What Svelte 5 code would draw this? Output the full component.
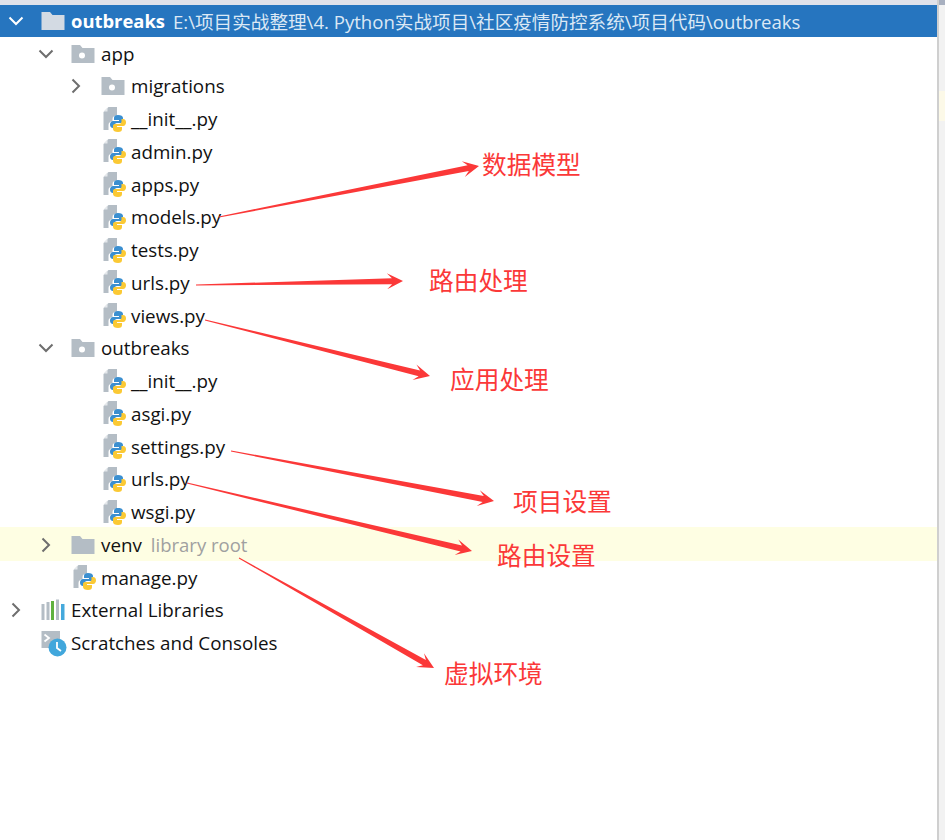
<script>
  const rows = [
    { level: 1, open: true, icon: "module", name: "app" },
    { level: 2, open: false, icon: "module", name: "migrations" },
    { level: 2, icon: "py", name: "__init__.py" },
    { level: 2, icon: "py", name: "admin.py" },
    { level: 2, icon: "py", name: "apps.py" },
    { level: 2, icon: "py", name: "models.py" },
    { level: 2, icon: "py", name: "tests.py" },
    { level: 2, icon: "py", name: "urls.py" },
    { level: 2, icon: "py", name: "views.py" },
    { level: 1, open: true, icon: "module", name: "outbreaks" },
    { level: 2, icon: "py", name: "__init__.py" },
    { level: 2, icon: "py", name: "asgi.py" },
    { level: 2, icon: "py", name: "settings.py" },
    { level: 2, icon: "py", name: "urls.py" },
    { level: 2, icon: "py", name: "wsgi.py" },
    { level: 1, open: false, icon: "folder", name: "venv", hint: "library root", marked: true },
    { level: 1, icon: "py", name: "manage.py" },
    { level: 0, open: false, icon: "libs", name: "External Libraries" },
    { level: 0, icon: "scratch", name: "Scratches and Consoles" }
  ];

  const notes = [
    { text: "数据模型", x: 482, y: 148, from: [219, 217], to: [479, 166] },
    { text: "路由处理", x: 429, y: 264, from: [196, 285], to: [403, 281] },
    { text: "应用处理", x: 450, y: 363, from: [205, 320], to: [430, 376] },
    { text: "项目设置", x: 513, y: 485, from: [231, 451], to: [494, 501] },
    { text: "路由设置", x: 497, y: 539, from: [187, 483], to: [472, 551] },
    { text: "虚拟环境", x: 444, y: 657, from: [239, 558], to: [434, 668] }
  ];

  // tapered shaft with a small swept-back head, same shape as the screenshot tool draws
  function arrow([x1, y1], [x2, y2]) {
    const len = Math.hypot(x2 - x1, y2 - y1);
    const ux = (x2 - x1) / len;
    const uy = (y2 - y1) / len;
    const at = (back, side) => {
      const x = x2 - ux * back - uy * side;
      const y = y2 - uy * back + ux * side;
      return `${x.toFixed(1)},${y.toFixed(1)}`;
    };
    const end = `${(x1 - uy * 0.5).toFixed(1)},${(y1 + ux * 0.5).toFixed(1)}`;
    const end2 = `${(x1 + uy * 0.5).toFixed(1)},${(y1 - ux * 0.5).toFixed(1)}`;
    return [end, at(11, 3), at(16, 8), at(0, 0), at(16, -8), at(11, -3), end2].join(" ");
  }
</script>

{#snippet chevron(open, cls)}
  <svg class="chevron {cls}" width="16" height="16" viewBox="0 0 16 16">
    {#if open}
      <path d="M1.5 4.500 8 11l6.500-6.500" />
    {:else}
      <path d="M4.500 1.500 11 8l-6.500 6.500" />
    {/if}
  </svg>
{/snippet}

{#snippet folder(fill, dot)}
  <svg width="24" height="20" viewBox="0 0 24 20">
    <path d="M0.500 1H9l2.500 3H23.500V19H0.500Z" fill={fill} />
    {#if dot}<circle cx="11" cy="11.500" r="3" fill="#fff" />{/if}
  </svg>
{/snippet}

{#snippet pyfile()}
  <svg class="py" width="24" height="27" viewBox="0 0 24 27">
    <path d="M5.500 1H14V9.500C11 9.500 9.500 11 9.500 13V15C7 15.500 5.500 17 5.500 19V24H0.500V6Z" fill="#b4bdc5" />
    <path d="M4.500 1.500V5.500H0.800Z" fill="#e4e8eb" />
    <path d="M15 9C12 9 11 10 11 12V14H16V15H10C8 15 7 17 7 18.500 7 20.500 8 22 10 22H11.500V19.500C11.500 18 12.500 17 14 17H18C19.500 17 20 16 20 15V12C20 10 18 9 15 9Z" fill="#3b8fd0" />
    <path d="M15 26C18 26 19 25 19 23V21H14V20H20C22 20 23 18 23 16.500 23 14.500 22 13 20 13H18.500V15.500C18.500 17 17.500 18 16 18H12C10.500 18 10 19 10 20V23C10 25 12 26 15 26Z" fill="#fbc934" />
  </svg>
{/snippet}

{#snippet libs()}
  <svg width="24" height="22" viewBox="0 0 24 22">
    <rect x="0.500" y="5" width="3" height="16" fill="#b4bdc5" />
    <rect x="5.500" y="3" width="3" height="18" fill="#b4bdc5" />
    <rect x="10" y="2" width="3" height="19" fill="#5fb13f" />
    <rect x="15" y="0.500" width="3" height="20.500" fill="#b4bdc5" />
    <rect x="20" y="5" width="3.500" height="16" fill="#45a9dc" />
  </svg>
{/snippet}

{#snippet scratch()}
  <svg class="scratch" width="26" height="27" viewBox="0 0 26 27">
    <path d="M0.500 1H19V10C13.500 10 10 13 9 18H0.500Z" fill="#b4bdc5" />
    <path d="M3.500 4.500 8 8l-4.500 3.500" fill="none" stroke="#fff" stroke-width="1.800" />
    <circle cx="16.500" cy="17.500" r="9" fill="#41a7dc" />
    <path d="M16 12v6l4 3" fill="none" stroke="#fff" stroke-width="1.800" />
  </svg>
{/snippet}

<div class="page">
  <div class="panel">
    <div class="topline"></div>
    <div class="row head">
      <span class="twist">{@render chevron(true, "light")}</span>
      <span class="icon">{@render folder("#d3dae3", false)}</span>
      <b class="title">outbreaks</b>
      <span class="path">E:\项目实战整理\4. Python实战项目\社区疫情防控系统\项目代码\outbreaks</span>
    </div>

    {#each rows as row}
      <div class="row" class:marked={row.marked} style="padding-left: {row.level * 30}px">
        <span class="twist">
          {#if row.open !== undefined}{@render chevron(row.open, "")}{/if}
        </span>
        <span class="icon">
          {#if row.icon === "py"}
            {@render pyfile()}
          {:else if row.icon === "module"}
            {@render folder("#b4bdc5", true)}
          {:else if row.icon === "folder"}
            {@render folder("#b4bdc5", false)}
          {:else if row.icon === "libs"}
            {@render libs()}
          {:else}
            {@render scratch()}
          {/if}
        </span>
        <span class="name">{row.name}</span>
        {#if row.hint}<span class="hint">{row.hint}</span>{/if}
      </div>
    {/each}
  </div>

  <div class="gutter">
    <div class="thumb"></div>
    <div class="mark"></div>
  </div>

  <!-- annotations drawn over the screenshot -->
  <svg class="arrows" width="945" height="840" viewBox="0 0 945 840">
    {#each notes as note}
      <polygon points={arrow(note.from, note.to)} />
    {/each}
  </svg>
  {#each notes as note}
    <span class="note" style="left: {note.x}px; top: {note.y}px">{note.text}</span>
  {/each}
</div>

<style>
  :global(body) {
    background: #fff;
  }

  .page {
    position: relative;
    display: flex;
    width: 945px;
    height: 840px;
    overflow: hidden;
    font-family: "Open Sans", "Noto Sans CJK SC", sans-serif;
    font-size: 18.8px;
    color: #111;
  }

  .panel {
    width: 937px;
    border-right: 2px solid #cfcfcf;
  }

  .topline {
    height: 4.5px;
    background: #e0e2ea;
  }

  .row {
    display: flex;
    align-items: center;
    height: 32.76px;
    white-space: nowrap;
  }

  .head {
    background: #2675bf;
    color: #fff;
  }

  .marked {
    background: #fefee3;
    box-shadow: 0 -2px 0 #fefee3;
  }

  .twist {
    display: flex;
    justify-content: center;
    flex: none;
    width: 32px;
    margin-right: 9px;
  }

  .icon {
    display: flex;
    flex: none;
    width: 30px;
  }

  .chevron {
    fill: none;
    stroke: #6e6e6e;
    stroke-width: 2;
  }

  .chevron.light {
    stroke: #fff;
  }

  .py {
    margin: 0 0 0 2px;
  }

  .title {
    font-size: 18.4px;
    font-weight: 700;
    margin-right: 8px;
    margin-top: -1px;
  }

  .path {
    font-size: 18.6px;
    margin-top: -1px;
    color: #dbe8f5;
  }

  .hint {
    margin-left: 9px;
    font-size: 18.5px;
    color: #a0a0a0;
  }

  .gutter {
    flex: 1;
    background: #f2f2f2;
  }

  .thumb {
    height: 4.5px;
    background: #a8b0c0;
  }

  .mark {
    height: 30px;
    margin-top: 86px;
    background: #fcf9e8;
  }

  .arrows {
    position: absolute;
    left: 0;
    top: 0;
    fill: #fb3838;
  }

  .note {
    position: absolute;
    font-family: "Noto Sans CJK SC", sans-serif;
    font-size: 24.7px;
    line-height: 30px;
    color: #fb3838;
  }
</style>
